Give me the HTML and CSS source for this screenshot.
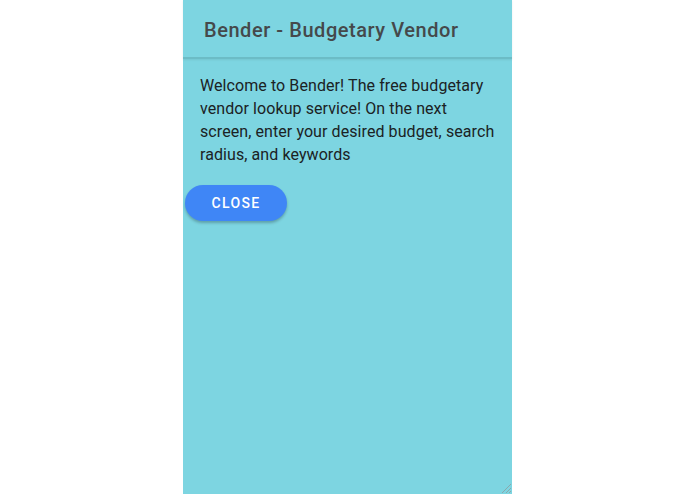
FILE: index.html
```html
<!DOCTYPE html>
<html>
<head>
<meta charset="utf-8">
<link rel="stylesheet" href="styles.css">
</head>
<body>
<div class="panel">
  <header class="bar"><h1 class="title">Bender - Budgetary Vendor</h1></header>
  <p class="intro">Welcome to Bender! The free budgetary vendor lookup service! On the next screen, enter your desired budget, search radius, and keywords</p>
  <button class="close">CLOSE</button>
  <svg class="grip" width="12" height="12" viewBox="0 0 12 12"><path d="M11 2L2 11M11 6L6 11M11 9L9 11" stroke="#8aa9ad" stroke-width="1"/></svg>
</div>
</body>
</html>
```
FILE: styles.css
```css
html, body { margin: 0; padding: 0; background: #fff; }
body { width: 695px; height: 494px; font-family: Roboto, "Liberation Sans", sans-serif; }
.panel {
  position: relative;
  margin-left: 183px;
  width: 329px;
  height: 494px;
  background: #7dd5e1;
  display: flex;
  flex-direction: column;
  align-items: flex-start;
}
.bar {
  align-self: stretch;
  height: 57px;
  border-bottom: 2px solid #6cbcc6;
  box-shadow: 0 1px 2px rgba(0,0,0,0.08);
  display: flex;
  align-items: center;
  padding-left: 21px;
  box-sizing: content-box;
}
.title { margin: 0; font-size: 20px; font-weight: 500; color: #45494b; letter-spacing: 0.55px; padding-top: 2px; }
.intro {
  margin: 15px 0 0 17px;
  width: 298px;
  font-size: 16px;
  line-height: 23px;
  letter-spacing: 0.08px;
  color: #1b2224;
}
.close {
  margin: 19px 0 0 2px;
  width: 102px;
  height: 36px;
  border: none;
  border-radius: 18px;
  background: #3f86f6;
  color: #fff;
  font-family: Roboto, "Liberation Sans", sans-serif;
  font-size: 14px;
  font-weight: 500;
  letter-spacing: 1.3px;
  box-shadow: 0 2px 3px rgba(0,0,0,0.25);
  padding: 0;
}
.grip { position: absolute; right: 0; bottom: 0; }
```
